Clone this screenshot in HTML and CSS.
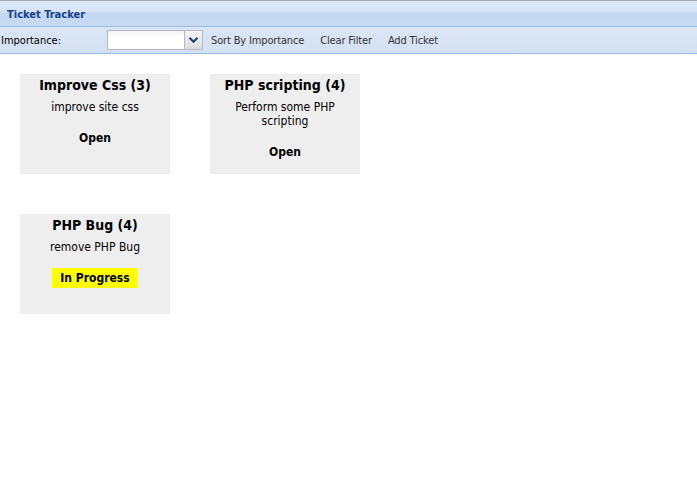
FILE: index.html
```html
<!DOCTYPE html>
<html>
<head>
<meta charset="utf-8">
<link rel="stylesheet" href="styles.css">
</head>
<body>
<div class="panel">
  <div class="panel-header"><span class="panel-title">Ticket Tracker</span></div>
  <div class="toolbar">
    <span class="tb-label">Importance:</span>
    <div class="combo">
      <div class="combo-input"></div>
      <div class="combo-trigger">
        <svg width="9" height="6" viewBox="0 0 9 6"><path d="M0.5 0.8 L4.5 4.8 L8.5 0.8" fill="none" stroke="#1f3f78" stroke-width="2"/></svg>
      </div>
    </div>
    <span class="tb-btn">Sort By Importance</span>
    <span class="tb-btn">Clear Filter</span>
    <span class="tb-btn">Add Ticket</span>
  </div>
  <div class="board">
    <div class="card">
      <div class="card-title">Improve Css (3)</div>
      <div class="card-desc">improve site css</div>
      <div class="card-status"><span class="status">Open</span></div>
    </div>
    <div class="card">
      <div class="card-title">PHP scripting (4)</div>
      <div class="card-desc">Perform some PHP scripting</div>
      <div class="card-status"><span class="status">Open</span></div>
    </div>
    <div class="card">
      <div class="card-title">PHP Bug (4)</div>
      <div class="card-desc">remove PHP Bug</div>
      <div class="card-status"><span class="status progress">In Progress</span></div>
    </div>
  </div>
</div>
</body>
</html>
```
FILE: styles.css
```css
html, body {
  margin: 0;
  padding: 0;
  background: #ffffff;
  font-family: "DejaVu Sans Condensed", "DejaVu Sans", sans-serif;
}
.panel-header {
  height: 25px;
  border-top: 1px solid #a3a9b3;
  border-bottom: 1px solid #99bbe8;
  background: linear-gradient(to bottom, #dde8f6 0, #d6e3f4 11px, #c3d7f1 12px, #c7daf2 25px);
  display: flex;
  align-items: center;
  padding-left: 7px;
  padding-top: 1px;
  height: 24px;
}
.panel-title {
  font-weight: bold;
  font-size: 11px;
  color: #15428b;
}
.toolbar {
  height: 26px;
  background: linear-gradient(to bottom, #dbe6f5, #d4e1f2);
  border-bottom: 1px solid #99bbe8;
  display: flex;
  align-items: center;
  font-size: 11px;
  color: #000;
}
.tb-label {
  padding-left: 1px;
  width: 106px;
}
.combo {
  display: flex;
  height: 20px;
}
.combo-input {
  width: 76px;
  height: 18px;
  border: 1px solid #b5b8c8;
  border-right: none;
  background: linear-gradient(to bottom, #f4f4f4, #ffffff 6px);
}
.combo-trigger {
  width: 17px;
  height: 18px;
  border: 1px solid #b5b8c8;
  background: linear-gradient(to bottom, #f5f5f5, #dcdcdc);
  display: flex;
  align-items: center;
  justify-content: center;
}
.tb-btn {
  color: #333;
  padding: 0 8px;
  letter-spacing: -0.15px;
}
.board {
  display: grid;
  grid-template-columns: 150px 150px;
  column-gap: 40px;
  row-gap: 40px;
  padding: 20px;
}
.card {
  background: #eeeeee;
  height: 100px;
  text-align: center;
  color: #000;
}
.card-title {
  font-weight: bold;
  font-size: 14px;
  padding-top: 2px;
  line-height: 18px;
}
.card-desc {
  font-size: 12px;
  line-height: 14px;
  padding: 6px 14px 0;
}
.card-status {
  margin-top: 13px;
}
.status {
  font-weight: bold;
  font-size: 12px;
  display: inline-block;
  padding: 3px 8px;
  line-height: 14px;
}
.status.progress {
  background: #ffff00;
}
```
